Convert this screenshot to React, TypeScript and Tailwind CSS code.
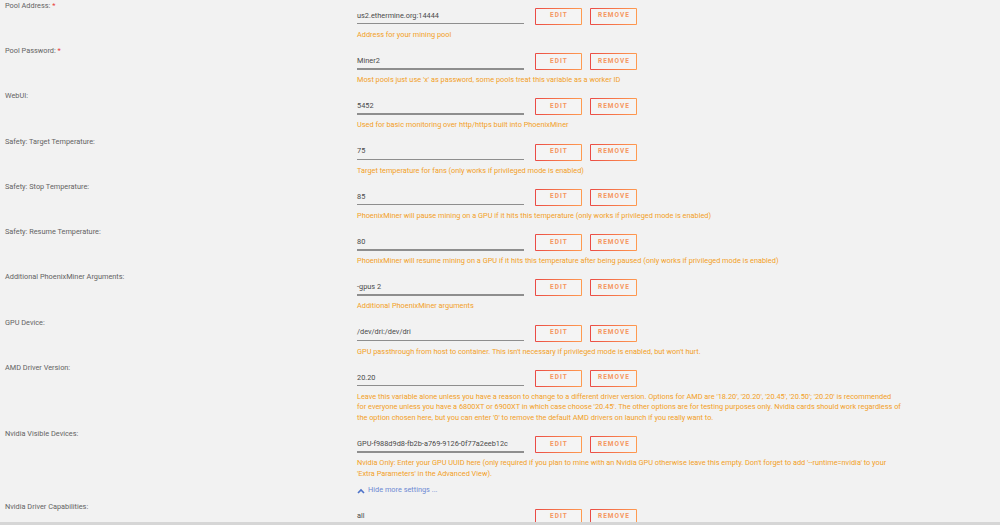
import React from 'react';

type Setting = {
  label: string;
  required?: boolean;
  value: string;
  help: string[];
  toggle?: boolean;
};

const SETTINGS: Setting[] = [
  { label: 'Pool Address:', required: true, value: 'us2.ethermine.org:14444', help: ['Address for your mining pool'] },
  {
    label: 'Pool Password:',
    required: true,
    value: 'Miner2',
    help: ["Most pools just use 'x' as password, some pools treat this variable as a worker ID"],
  },
  { label: 'WebUI:', value: '5452', help: ['Used for basic monitoring over http/https built into PhoenixMiner'] },
  {
    label: 'Safety: Target Temperature:',
    value: '75',
    help: ['Target temperature for fans (only works if privileged mode is enabled)'],
  },
  {
    label: 'Safety: Stop Temperature:',
    value: '85',
    help: ['PhoenixMiner will pause mining on a GPU if it hits this temperature (only works if privileged mode is enabled)'],
  },
  {
    label: 'Safety: Resume Temperature:',
    value: '80',
    help: [
      'PhoenixMiner will resume mining on a GPU if it hits this temperature after being paused (only works if privileged mode is enabled)',
    ],
  },
  { label: 'Additional PhoenixMiner Arguments:', value: '-gpus 2', help: ['Additional PhoenixMiner arguments'] },
  {
    label: 'GPU Device:',
    value: '/dev/dri:/dev/dri',
    help: ["GPU passthrough from host to container. This isn't necessary if privileged mode is enabled, but won't hurt."],
  },
  {
    label: 'AMD Driver Version:',
    value: '20.20',
    help: [
      "Leave this variable alone unless you have a reason to change to a different driver version. Options for AMD are '18.20', '20.20', '20.45', '20.50'; '20.20' is recommended",
      "for everyone unless you have a 6800XT or 6900XT in which case choose '20.45'. The other options are for testing purposes only. Nvidia cards should work regardless of",
      "the option chosen here, but you can enter '0' to remove the default AMD drivers on launch if you really want to.",
    ],
  },
  {
    label: 'Nvidia Visible Devices:',
    value: 'GPU-f988d9d8-fb2b-a769-9126-0f77a2eeb12c',
    help: [
      "Nvidia Only: Enter your GPU UUID here (only required if you plan to mine with an Nvidia GPU otherwise leave this empty. Don't forget to add '--runtime=nvidia' to your",
      "'Extra Parameters' in the Advanced View).",
    ],
    toggle: true,
  },
  { label: 'Nvidia Driver Capabilities:', value: 'all', help: [] },
];

const GradientButton: React.FC<{ text: string }> = ({ text }) => (
  <div className="w-[47px] h-[17px] p-[1px] bg-gradient-to-r from-[#ea4a45] to-[#ff9b50] rounded-[1px]">
    <div className="w-full h-full bg-[#f4f4f4] flex items-center justify-center">
      <span className="text-[6.5px] font-bold tracking-[0.16em] pl-[0.16em] text-[#f5965f]">{text}</span>
    </div>
  </div>
);

const Row: React.FC<{ s: Setting }> = ({ s }) => (
  <div className="flex pb-[5.75px]">
    <div className="w-[357px] shrink-0 pl-[5px] leading-[10.5px] text-[#636363]">
      {s.label}
      {s.required && <span className="text-[#e8413c]"> *</span>}
    </div>
    <div className="pt-[7px] flex flex-col">
      <div className="flex items-start h-[17px]">
        <div className="w-[167px] h-[17px] flex flex-col">
          <div className="flex-1 flex items-center text-[#4a4a4a]">{s.value}</div>
          <div className="h-[1.5px] bg-[#8e8e8e] mb-[0.5px]" />
        </div>
        <div className="ml-[11px] flex gap-[8px]">
          <GradientButton text="EDIT" />
          <GradientButton text="REMOVE" />
        </div>
      </div>
      {s.help.length > 0 && (
        <div className="mt-[5px] leading-[10.5px] text-[#f29f26] whitespace-nowrap">
          {s.help.map((line, i) => (
            <div key={i}>{line}</div>
          ))}
        </div>
      )}
      {s.toggle && (
        <div className="mt-[6.25px] leading-[10.5px] flex items-center gap-[3px] text-[#6d89d2]">
          <svg width="8" height="6" viewBox="0 0 8 6" className="mt-[1px]">
            <path d="M1 5 L4 2 L7 5" fill="none" stroke="#4e73c9" strokeWidth="1.6" />
          </svg>
          <span>Hide more settings ...</span>
        </div>
      )}
    </div>
  </div>
);

const App: React.FC = () => {
  return (
    <div
      className="w-[1000px] h-[525px] bg-[#f2f2f2] overflow-hidden flex flex-col text-[7.35px]"
      style={{ fontFamily: 'Roboto, "Open Sans", sans-serif' }}
    >
      <div className="flex-1 overflow-hidden pt-[0.75px]">
        {SETTINGS.map((s) => (
          <Row key={s.label} s={s} />
        ))}
      </div>
      <div className="h-[3px] bg-[#d6d6d6]" />
    </div>
  );
};

export default App;
